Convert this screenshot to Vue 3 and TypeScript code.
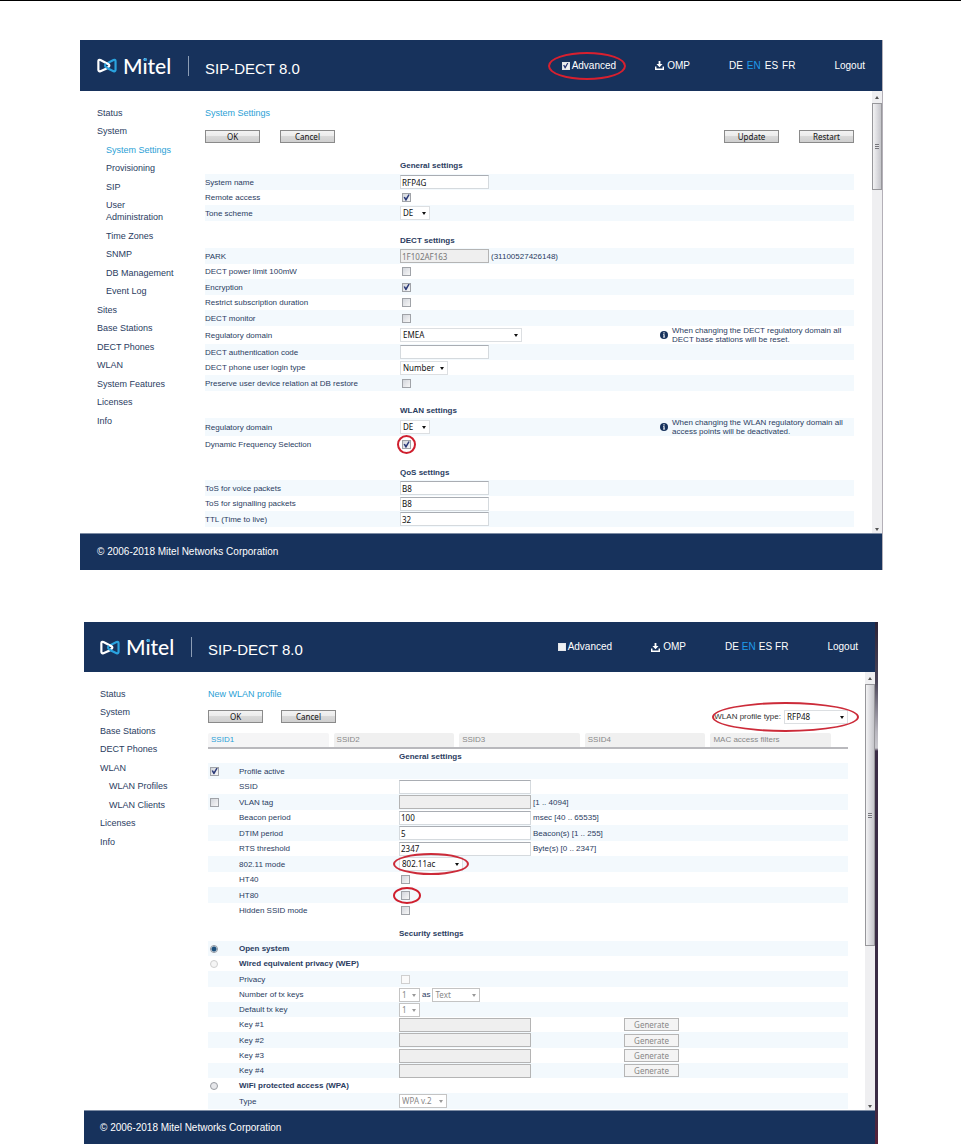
<script setup lang="ts">
import { reactive, ref } from 'vue'

type Kind = 'text' | 'check' | 'select' | 'pair' | 'none'

interface Row {
  id: string
  label: string
  kind: Kind
  value?: string
  checked?: boolean
  disabled?: boolean
  ring?: boolean
  size?: string
  suffix?: string
  note?: string[]
  lead?: 'check' | 'radio'
  leadOn?: boolean
  leadDisabled?: boolean
  bold?: boolean
  generate?: boolean
}

interface Section {
  title: string
  rows: Row[]
}

interface NavItem {
  label: string
  sub?: boolean
  active?: boolean
}

const languages = ['DE', 'EN', 'ES', 'FR']

const systemNav: NavItem[] = [
  { label: 'Status' },
  { label: 'System' },
  { label: 'System Settings', sub: true, active: true },
  { label: 'Provisioning', sub: true },
  { label: 'SIP', sub: true },
  { label: 'User Administration', sub: true },
  { label: 'Time Zones', sub: true },
  { label: 'SNMP', sub: true },
  { label: 'DB Management', sub: true },
  { label: 'Event Log', sub: true },
  { label: 'Sites' },
  { label: 'Base Stations' },
  { label: 'DECT Phones' },
  { label: 'WLAN' },
  { label: 'System Features' },
  { label: 'Licenses' },
  { label: 'Info' },
]

const wlanNav: NavItem[] = [
  { label: 'Status' },
  { label: 'System' },
  { label: 'Base Stations' },
  { label: 'DECT Phones' },
  { label: 'WLAN' },
  { label: 'WLAN Profiles', sub: true },
  { label: 'WLAN Clients', sub: true },
  { label: 'Licenses' },
  { label: 'Info' },
]

const systemSections = reactive<Section[]>([
  {
    title: 'General settings',
    rows: [
      { id: 'name', label: 'System name', kind: 'text', value: 'RFP4G' },
      { id: 'remote', label: 'Remote access', kind: 'check', checked: true },
      { id: 'tone', label: 'Tone scheme', kind: 'select', value: 'DE', size: 'xs' },
    ],
  },
  {
    title: 'DECT settings',
    rows: [
      { id: 'park', label: 'PARK', kind: 'text', value: '1F102AF163', disabled: true, suffix: '(31100527426148)' },
      { id: 'power', label: 'DECT power limit 100mW', kind: 'check', checked: false },
      { id: 'encryption', label: 'Encryption', kind: 'check', checked: true },
      { id: 'restrict', label: 'Restrict subscription duration', kind: 'check', checked: false },
      { id: 'monitor', label: 'DECT monitor', kind: 'check', checked: false },
      {
        id: 'dect-domain',
        label: 'Regulatory domain',
        kind: 'select',
        value: 'EMEA',
        size: 'xl',
        note: ['When changing the DECT regulatory domain all', 'DECT base stations will be reset.'],
      },
      { id: 'auth', label: 'DECT authentication code', kind: 'text', value: '' },
      { id: 'login', label: 'DECT phone user login type', kind: 'select', value: 'Number', size: 'md' },
      { id: 'preserve', label: 'Preserve user device relation at DB restore', kind: 'check', checked: false },
    ],
  },
  {
    title: 'WLAN settings',
    rows: [
      {
        id: 'wlan-domain',
        label: 'Regulatory domain',
        kind: 'select',
        value: 'DE',
        size: 'xs',
        note: ['When changing the WLAN regulatory domain all', 'access points will be deactivated.'],
      },
      { id: 'dfs', label: 'Dynamic Frequency Selection', kind: 'check', checked: true, ring: true },
    ],
  },
  {
    title: 'QoS settings',
    rows: [
      { id: 'tos-voice', label: 'ToS for voice packets', kind: 'text', value: 'B8' },
      { id: 'tos-signal', label: 'ToS for signalling packets', kind: 'text', value: 'B8' },
      { id: 'ttl', label: 'TTL (Time to live)', kind: 'text', value: '32' },
    ],
  },
])

const wlanSections = reactive<Section[]>([
  {
    title: 'General settings',
    rows: [
      { id: 'active', label: 'Profile active', kind: 'none', lead: 'check', leadOn: true },
      { id: 'ssid', label: 'SSID', kind: 'text', value: '' },
      { id: 'vlan', label: 'VLAN tag', kind: 'text', value: '', disabled: true, lead: 'check', leadOn: false, suffix: '[1 .. 4094]' },
      { id: 'beacon', label: 'Beacon period', kind: 'text', value: '100', suffix: 'msec [40 .. 65535]' },
      { id: 'dtim', label: 'DTIM period', kind: 'text', value: '5', suffix: 'Beacon(s) [1 .. 255]' },
      { id: 'rts', label: 'RTS threshold', kind: 'text', value: '2347', suffix: 'Byte(s) [0 .. 2347]' },
      { id: 'mode', label: '802.11 mode', kind: 'select', value: '802.11ac', size: 'lg', ring: true },
      { id: 'ht40', label: 'HT40', kind: 'check', checked: false },
      { id: 'ht80', label: 'HT80', kind: 'check', checked: false, ring: true },
      { id: 'hidden', label: 'Hidden SSID mode', kind: 'check', checked: false },
    ],
  },
  {
    title: 'Security settings',
    rows: [
      { id: 'open', label: 'Open system', kind: 'none', lead: 'radio', bold: true },
      { id: 'wep', label: 'Wired equivalent privacy (WEP)', kind: 'none', lead: 'radio', leadDisabled: true, bold: true },
      { id: 'privacy', label: 'Privacy', kind: 'check', checked: false, disabled: true },
      { id: 'txkeys', label: 'Number of tx keys', kind: 'pair', value: '1', size: 'tiny', disabled: true },
      { id: 'defkey', label: 'Default tx key', kind: 'select', value: '1', size: 'tiny', disabled: true },
      { id: 'key1', label: 'Key #1', kind: 'text', value: '', disabled: true, generate: true },
      { id: 'key2', label: 'Key #2', kind: 'text', value: '', disabled: true, generate: true },
      { id: 'key3', label: 'Key #3', kind: 'text', value: '', disabled: true, generate: true },
      { id: 'key4', label: 'Key #4', kind: 'text', value: '', disabled: true, generate: true },
      { id: 'wpa', label: 'WiFi protected access (WPA)', kind: 'none', lead: 'radio', bold: true },
      { id: 'type', label: 'Type', kind: 'select', value: 'WPA v.2', size: 'md', disabled: true },
    ],
  },
])

const windows = reactive([
  { key: 'system', title: 'System Settings', nav: systemNav, sections: systemSections, advanced: true },
  { key: 'wlan', title: 'New WLAN profile', nav: wlanNav, sections: wlanSections, advanced: false },
])

const tabs = ['SSID1', 'SSID2', 'SSID3', 'SSID4', 'MAC access filters']
const activeTab = ref('SSID1')
const security = ref('open')
const profileType = ref('RFP48')
</script>

<template>
  <main class="page">
    <section v-for="win in windows" :key="win.key" class="window" :class="win.key">
      <header class="bar">
        <div class="brand">
          <svg class="mark" viewBox="0 0 22 16" aria-hidden="true">
            <path d="M12 11.2 18.2 14.2Q20.4 15 20.4 12.8V3.2Q20.4 1 18.2 1.9L9.8 6.2" fill="none" stroke="#2aa3df" stroke-width="2.4" />
            <path d="M12.4 10.2 9.4 11.8 3.8 14.2Q1.5 15 1.5 12.8V3.2Q1.5 1 3.8 1.9L12.6 6.6Q14.6 8 12.6 9.6L9 11.8" fill="none" stroke="#fff" stroke-width="2.4" />
            <path d="M9.8 6.2Q7.6 8 9.8 9.8L13.2 11.8" fill="none" stroke="#2aa3df" stroke-width="2.2" />
          </svg>
          <span class="wordmark">Mitel</span>
        </div>
        <h1 class="product">SIP-DECT 8.0</h1>
        <nav class="tools" aria-label="Tools">
          <label class="advanced">
            <input v-model="win.advanced" type="checkbox" class="box" />
            Advanced
          </label>
          <a href="#" class="omp">
            <svg viewBox="0 0 10 10" aria-hidden="true">
              <path d="M4 0h2v3.4h2.4L5 7 1.6 3.4H4z" fill="#fff" />
              <path d="M.8 6.2v2.9h8.4V6.2" fill="none" stroke="#fff" stroke-width="1.6" />
            </svg>
            OMP
          </a>
          <span class="langs">
            <a v-for="l in languages" :key="l" href="#" :class="{ on: l === 'EN' }">{{ l }}</a>
          </span>
          <a href="#">Logout</a>
        </nav>
      </header>

      <div class="body">
        <ul class="menu">
          <li v-for="item in win.nav" :key="item.label" :class="{ sub: item.sub }">
            <a href="#" :class="{ active: item.active }">{{ item.label }}</a>
          </li>
        </ul>

        <div class="content">
          <h2 class="title">{{ win.title }}</h2>
          <div class="actions">
            <button type="button" class="btn">OK</button>
            <button type="button" class="btn">Cancel</button>
            <div v-if="win.key === 'system'" class="right">
              <button type="button" class="btn">Update</button>
              <button type="button" class="btn">Restart</button>
            </div>
            <div v-else class="right profile">
              <label for="profile-type">WLAN profile type:</label>
              <span class="pick wide">
                <select id="profile-type" v-model="profileType">
                  <option>RFP48</option>
                </select>
              </span>
            </div>
          </div>

          <div v-if="win.key === 'wlan'" class="tabs" role="tablist">
            <button
              v-for="t in tabs"
              :key="t"
              type="button"
              role="tab"
              class="tab"
              :class="{ current: t === activeTab }"
              :aria-selected="t === activeTab"
              @click="activeTab = t"
            >{{ t }}</button>
          </div>

          <table class="form">
            <tbody v-for="sec in win.sections" :key="sec.title">
              <tr class="head">
                <td v-if="win.key === 'wlan'" class="lead"></td>
                <td class="name"></td>
                <th scope="rowgroup">{{ sec.title }}</th>
                <td class="extra"></td>
              </tr>
              <tr v-for="row in sec.rows" :key="row.id" class="row">
                <td v-if="win.key === 'wlan'" class="lead">
                  <input
                    v-if="row.lead === 'check'"
                    v-model="row.leadOn"
                    type="checkbox"
                    class="box"
                    :aria-label="row.label"
                  />
                  <input
                    v-if="row.lead === 'radio'"
                    :id="row.id"
                    v-model="security"
                    type="radio"
                    name="security"
                    class="dot"
                    :value="row.id"
                    :disabled="row.leadDisabled"
                  />
                </td>
                <td class="name">
                  <label :for="row.id" :class="{ bold: row.bold }">{{ row.label }}</label>
                </td>
                <td class="control">
                  <div class="cell">
                    <input
                      v-if="row.kind === 'text'"
                      :id="row.id"
                      v-model="row.value"
                      type="text"
                      class="field"
                      :disabled="row.disabled"
                    />
                    <span v-else-if="row.kind === 'check'" class="tick" :class="{ ring: row.ring }">
                      <input
                        :id="row.id"
                        v-model="row.checked"
                        type="checkbox"
                        class="box"
                        :disabled="row.disabled"
                      />
                    </span>
                    <span
                      v-else-if="row.kind !== 'none'"
                      class="pick"
                      :class="[row.size, { off: row.disabled, ring: row.ring }]"
                    >
                      <select :id="row.id" v-model="row.value" :disabled="row.disabled">
                        <option>{{ row.value }}</option>
                      </select>
                    </span>
                    <template v-if="row.kind === 'pair'">
                      <span>as</span>
                      <span class="pick md off">
                        <select aria-label="Key format" disabled>
                          <option>Text</option>
                        </select>
                      </span>
                    </template>
                    <span v-if="row.suffix">{{ row.suffix }}</span>
                  </div>
                </td>
                <td class="extra">
                  <div v-if="row.note" class="note">
                    <svg viewBox="0 0 8 8" aria-hidden="true">
                      <circle cx="4" cy="4" r="4" fill="#17325c" />
                      <path d="M3.4 1.3h1.2v1.2H3.4zM3 3.2h1.6v2.6h.5v.8H3v-.8h.5V4H3z" fill="#fff" />
                    </svg>
                    <p><span v-for="line in row.note" :key="line">{{ line }}</span></p>
                  </div>
                  <button v-if="row.generate" type="button" class="btn gen" disabled>Generate</button>
                </td>
              </tr>
            </tbody>
          </table>
        </div>

        <div class="scroll" aria-hidden="true">
          <i class="up"></i>
          <div class="thumb"><i></i></div>
          <i class="down"></i>
        </div>
      </div>

      <footer class="foot">© 2006-2018 Mitel Networks Corporation</footer>
    </section>
  </main>
</template>

<style>
body {
  margin: 0;
  background: #fff;
}
</style>

<style scoped>
* {
  box-sizing: border-box;
}

.page {
  border-top: 1px solid #000;
  padding: 39px 78px 0 80px;
  display: flex;
  flex-direction: column;
  gap: 52px;
  font-family: 'Liberation Sans', Arial, sans-serif;
  font-size: 8px;
  line-height: 9px;
  color: #2a3c61;
}

.window {
  border-right: 1px solid #b4b0b8;
}

.window.wlan {
  margin: 0 5px 0 4px;
  padding-right: 3px;
  border-right: 0;
  background: linear-gradient(#2b2338 0, #4b4558 60px, #b9b7bf 110px, #c9c8ce 126px, #3a2c45 129px, #3a2c45 480px, #5a2038 100%);
}

.bar {
  height: 51px;
  display: flex;
  align-items: center;
  padding: 0 17px;
  background: #17325c;
  color: #fff;
}

.wlan .bar {
  height: 50px;
  padding-left: 16px;
}

.brand {
  width: 92px;
  display: flex;
  align-items: center;
  gap: 6px;
  border-right: 1px solid #8c9db5;
}

.mark {
  width: 20px;
  height: 15px;
}

.wordmark {
  position: relative;
  font-family: Lato, sans-serif;
  font-size: 21px;
  font-weight: 500;
  line-height: 20px;
}

.wordmark::after {
  content: '';
  position: absolute;
  left: 21px;
  top: 2px;
  width: 3px;
  height: 3px;
  border-radius: 50%;
  background: #2aa3df;
}

.product {
  margin: 6px 0 0 16px;
  font-size: 15px;
  font-weight: 400;
  line-height: 18px;
}

.tools {
  margin-left: auto;
  display: flex;
  align-items: center;
  gap: 39px;
  font-size: 10px;
  line-height: 12px;
}

.tools a {
  color: #fff;
  text-decoration: none;
}

.langs {
  display: flex;
  gap: 3px;
}

.system .langs {
  gap: 4px;
}

.tools .langs .on {
  color: #1f9bea;
}

.advanced {
  position: relative;
  display: flex;
  align-items: center;
  gap: 2px;
}

.system .advanced::after {
  content: '';
  position: absolute;
  inset: -8px -10px -8px -14px;
  border: 2px solid #d8202f;
  border-radius: 50%;
  pointer-events: none;
}

.omp {
  display: flex;
  align-items: center;
  gap: 3px;
}

.omp svg {
  width: 9px;
  height: 9px;
}

.body {
  display: grid;
  grid-template-columns: 125px 1fr 10px;
  background: #fff;
}

.wlan .body {
  grid-template-columns: 124px 1fr 10px;
}

.menu {
  margin: 0;
  padding: 16px 25px 0 17px;
  list-style: none;
  font-size: 9px;
  line-height: 12px;
}

.wlan .menu {
  padding-left: 16px;
}

.menu li {
  padding-bottom: 6px;
}

.menu li:nth-child(even) {
  padding-bottom: 7px;
}

.menu .sub {
  padding-left: 9px;
}

.menu a {
  display: block;
  color: #2a3c61;
  text-decoration: none;
}

.menu a.active {
  color: #2b9fd6;
}

.content {
  padding: 16px 18px 6px 0;
}

.wlan .content {
  padding-right: 17px;
  padding-bottom: 1px;
}

.title {
  margin: 0;
  font-size: 9px;
  font-weight: 400;
  line-height: 12px;
  color: #2b9fd6;
}

.actions {
  display: flex;
  align-items: center;
  gap: 20px;
  height: 13px;
  margin: 11px 0 13px;
}

.wlan .actions {
  gap: 18px;
  margin: 10px 0;
}

.right {
  margin-left: auto;
  display: flex;
  align-items: center;
  gap: 20px;
}

.right.profile {
  position: relative;
  gap: 3px;
  color: #333;
}

.profile::after {
  content: '';
  position: absolute;
  inset: -8px -11px -8px -2px;
  border: 2px solid #cc2b39;
  border-radius: 50%;
  pointer-events: none;
}

.btn {
  width: 55px;
  height: 13px;
  padding: 0;
  border: 1px solid #8a8a8a;
  background: linear-gradient(#f3f3f3, #ebebeb 50%, #d9d9d9 50%, #cfcfcf);
  font-family: 'Noto Sans', sans-serif;
  font-size: 8px;
  line-height: 11px;
  color: #111;
}

.btn.gen {
  display: block;
  border-color: #b5b5b5;
  background: #f4f4f4;
  color: #888;
}

.tabs {
  display: flex;
  gap: 5px;
  padding-right: 17px;
  border-bottom: 2px solid #b9b9bd;
}

.tab {
  flex: 1;
  height: 14px;
  padding: 0 3px;
  border: 0;
  border-radius: 2px 2px 0 0;
  background: #f0f0f0;
  font-family: inherit;
  font-size: 8px;
  line-height: 14px;
  text-align: left;
  color: #888;
}

.tab.current {
  background: #f5f5f6;
  color: #2b9fd6;
}

.form {
  width: 100%;
  table-layout: fixed;
  border-collapse: collapse;
}

.form td,
.form th {
  padding: 0;
  vertical-align: middle;
  text-align: left;
}

.form .name {
  width: 195px;
}

.wlan .form .name {
  width: 160px;
}

.form .lead {
  width: 31px;
}

.form .lead input {
  margin-left: 2px;
}

.form .extra {
  width: 194px;
}

.wlan .form .extra {
  width: 224px;
}

.form .head th {
  height: 27px;
  padding-top: 11px;
  line-height: 9px;
}

.wlan .form .head th {
  height: 23px;
  padding-top: 8px;
}

.form tbody:first-child .head th {
  height: 18px;
  padding-top: 0;
}

.wlan .form tbody:first-child .head th {
  height: 14px;
}

.row {
  height: 15px;
}

.system .row:nth-child(even),
.wlan tbody:first-child .row:nth-child(even),
.wlan .row:nth-child(4n) {
  height: 16px;
}

.system tbody:nth-child(3) .row {
  height: 17px;
}

.row:nth-child(even) {
  background: #f3f9fd;
}

.bold {
  font-weight: 700;
}

.cell {
  display: flex;
  align-items: center;
  gap: 2px;
}

.field {
  width: 89px;
  height: 14px;
  padding: 0 1px;
  border: 1px solid #d5dade;
  border-top-color: #a9adb3;
  background: #fff;
  font-family: 'Noto Sans', sans-serif;
  font-size: 8px;
  line-height: 12px;
  color: #111;
}

.wlan .field {
  width: 132px;
}

.field:disabled {
  border-color: #b4b4b4;
  background: #efefef;
  color: #777;
}

.tick {
  position: relative;
  display: block;
  margin-left: 2px;
}

.box {
  appearance: none;
  display: block;
  width: 9px;
  height: 9px;
  margin: 0;
  border: 1px solid #a0a3a8;
  background: linear-gradient(135deg, #d3d6dc, #f7f7f7);
}

.box:disabled {
  border-color: #cfcfcf;
  background: #fafafa;
}

.box:checked::before {
  content: '';
  display: block;
  width: 7px;
  height: 7px;
  background: #2b3a78;
  clip-path: polygon(8% 45%, 28% 38%, 42% 62%, 78% 4%, 96% 10%, 48% 98%, 36% 98%);
}

.advanced .box {
  width: 8px;
  height: 8px;
  border-color: #e4e6ea;
  background: #eef0f2;
}

.advanced .box:checked::before {
  width: 6px;
  height: 6px;
}

.dot {
  appearance: none;
  display: block;
  width: 8px;
  height: 8px;
  margin: 0;
  border: 1px solid #9a9da3;
  border-radius: 50%;
  background: #e6e7ea;
}

.dot:disabled {
  border-color: #cfcfcf;
  background: #f5f5f5;
}

.dot:checked {
  background: radial-gradient(#1b4f7c 0 2px, #cfe0ee 3px);
}

.tick.ring::after {
  content: '';
  position: absolute;
  inset: -5px;
  border: 2px solid #cf1f2e;
  border-radius: 50%;
  pointer-events: none;
}

.wlan .tick.ring::after {
  inset: -4px -11px -4px -8px;
}

.pick {
  position: relative;
  display: block;
  width: 30px;
  height: 14px;
}

.pick.tiny {
  width: 21px;
}

.pick.md {
  width: 48px;
}

.pick.lg {
  width: 64px;
}

.pick.wide {
  width: 64px;
}

.pick.xl {
  width: 122px;
}

.pick select {
  appearance: none;
  display: block;
  width: 100%;
  height: 100%;
  padding: 0 2px;
  border: 1px solid #dcdfe2;
  border-radius: 0;
  background: #fff;
  font-family: 'Noto Sans', sans-serif;
  font-size: 8px;
  line-height: 12px;
  color: #111;
}

.pick::before {
  content: '';
  position: absolute;
  right: 4px;
  top: 6px;
  border: 2px solid transparent;
  border-top: 3px solid #111;
  border-bottom: 0;
  pointer-events: none;
}

.pick.off select {
  border-color: #c4c4c4;
  color: #888;
  opacity: 1;
}

.pick.off::before {
  border-top-color: #999;
}

.pick.ring::after {
  content: '';
  position: absolute;
  inset: -4px -6px;
  border: 2px solid #cc2b39;
  border-radius: 50%;
  pointer-events: none;
}

.note {
  display: flex;
  align-items: center;
  gap: 4px;
}

.note svg {
  flex: none;
  width: 8px;
  height: 8px;
}

.note p {
  margin: 0;
  white-space: nowrap;
}

.note span {
  display: block;
}

.scroll {
  display: flex;
  flex-direction: column;
  align-items: center;
  background: #efeff1;
}

.up,
.down {
  width: 0;
  height: 0;
  border: 2px solid transparent;
}

.up {
  margin: 3px 0 4px;
  border-bottom: 3px solid #555;
}

.down {
  margin: auto 0 2px;
  border-top: 3px solid #555;
  border-bottom: 0;
}

.thumb {
  width: 10px;
  height: 87px;
  display: flex;
  align-items: center;
  justify-content: center;
  border: 1px solid #97979b;
  background: linear-gradient(90deg, #f3f3f4, #dcdce0 50%, #c5c5ca);
}

.wlan .thumb {
  height: 262px;
}

.thumb i {
  width: 4px;
  height: 5px;
  background: repeating-linear-gradient(#77777c 0 1px, #e2e2e6 1px 2px);
}

.foot {
  height: 37px;
  padding: 0 17px;
  border-top: 1px solid #7d8ca4;
  background: #17325c;
  color: #fff;
  font-size: 10px;
  line-height: 36px;
}

.wlan .foot {
  height: 34px;
  padding-left: 16px;
  line-height: 33px;
}
</style>
